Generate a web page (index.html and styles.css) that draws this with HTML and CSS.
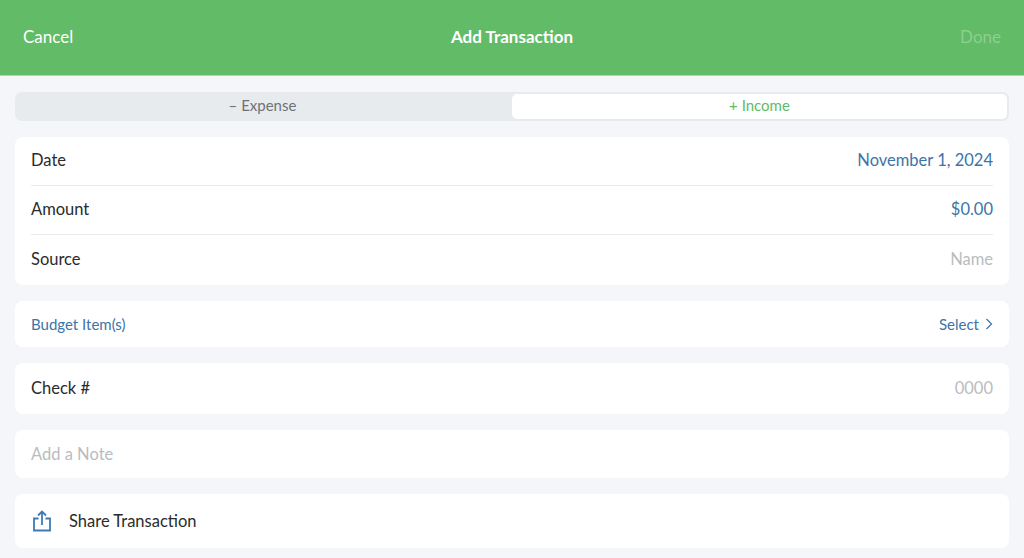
FILE: index.html
```html
<!DOCTYPE html>
<html>
<head>
  <meta charset="utf-8">
  <meta name="viewport" content="width=device-width, initial-scale=1">
  <title>Add Transaction</title>
  <link rel="stylesheet" href="styles.css">
</head>
<body>
  <header class="topbar">
    <span class="topbar-btn">Cancel</span>
    <span class="topbar-title">Add Transaction</span>
    <span class="topbar-btn topbar-btn-off">Done</span>
  </header>

  <main class="content">
    <div class="segment">
      <div class="segment-item">– Expense</div>
      <div class="segment-item segment-active">+ Income</div>
    </div>

    <section class="card">
      <div class="row row-line">
        <span>Date</span>
        <span class="value">November 1, 2024</span>
      </div>
      <div class="row row-line">
        <span>Amount</span>
        <span class="value">$0.00</span>
      </div>
      <div class="row row-last">
        <span>Source</span>
        <span class="placeholder">Name</span>
      </div>
    </section>

    <section class="card card-budget">
      <span class="budget-label">Budget Item(s)</span>
      <span class="budget-select">Select
        <svg class="chevron" width="8" height="12" viewBox="0 0 8 12"><path d="M1.5 1l5 5-5 5" fill="none" stroke="#3d74a8" stroke-width="1.2"/></svg>
      </span>
    </section>

    <section class="card card-check">
      <span>Check #</span>
      <span class="placeholder">0000</span>
    </section>

    <section class="card card-note">
      <span class="placeholder">Add a Note</span>
    </section>

    <section class="card card-share">
      <svg class="share-icon" width="20" height="22" viewBox="0 0 20 22"><path d="M6.5 8.5H2v12h16v-12h-4.5M10 15V2M6 5.5L10 1.5l4 4" fill="none" stroke="#3d7ab5" stroke-width="1.8"/></svg>
      <span>Share Transaction</span>
    </section>
  </main>
</body>
</html>
```

FILE: styles.css
```css
html, body {
  margin: 0;
  padding: 0;
}
body {
  height: 558px;
  overflow: hidden;
  background-color: #f4f6f9;
  color: #2b2b2b;
  font-family: "Lato", "Liberation Sans", sans-serif;
  font-size: 16.5px;
}
.topbar {
  height: 73px;
  padding: 0 23px 2px;
  display: grid;
  grid-template-columns: 1fr auto 1fr;
  align-items: center;
  background-color: #62bb66;
  border-bottom: 1px solid #a5dca8;
  color: #fff;
  font-size: 17px;
}
.topbar-btn:last-child {
  text-align: right;
}
.topbar-title {
  font-weight: 700;
}
.topbar-btn-off {
  color: #8dcf90;
}
.content {
  padding: 16px 15px 0;
  display: flex;
  flex-direction: column;
  gap: 16px;
}
.segment {
  height: 29px;
  display: flex;
  background-color: #e8ebed;
  border-radius: 7px;
  font-size: 15px;
}
.segment-item {
  flex: 1;
  display: flex;
  align-items: center;
  justify-content: center;
  padding-bottom: 3px;
  color: #6d7278;
}
.segment-active {
  background-color: #fff;
  border: 2px solid #e8ebed;
  border-radius: 7px;
  padding-bottom: 3px;
  color: #62bb66;
}
.card {
  background-color: #fff;
  border-radius: 8px;
  padding: 0 16px;
}
.row {
  height: 49px;
  padding-bottom: 2px;
  box-sizing: border-box;
  display: flex;
  align-items: center;
  justify-content: space-between;
}
.row-line {
  border-bottom: 1px solid #e8eaec;
}
.row-last {
  height: 50px;
}
.value {
  color: #3d74a8;
}
.placeholder {
  color: #b9bcc0;
}
.card-budget {
  height: 46px;
  padding-bottom: 1px;
  box-sizing: border-box;
  display: flex;
  align-items: center;
  justify-content: space-between;
  font-size: 15px;
  color: #3d74a8;
}
.budget-select {
  display: flex;
  align-items: center;
  gap: 6px;
}
.card-check {
  height: 51px;
  padding-bottom: 2px;
  box-sizing: border-box;
  display: flex;
  align-items: center;
  justify-content: space-between;
}
.card-note {
  height: 48px;
  padding-bottom: 1px;
  box-sizing: border-box;
  display: flex;
  align-items: center;
}
.card-share {
  height: 54px;
  display: flex;
  align-items: center;
  gap: 17px;
  padding-left: 17px;
}
```
